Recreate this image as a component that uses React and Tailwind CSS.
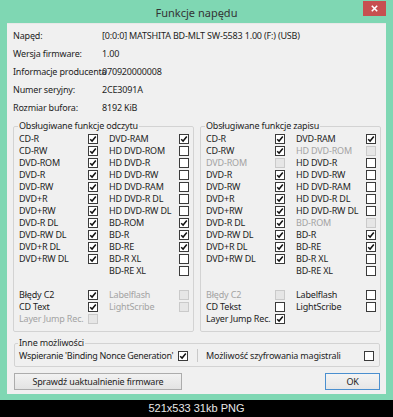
import React from "react";

const FONT = { fontFamily: '"Noto Sans", "Open Sans", sans-serif' };

function Box({ v }) {
  if (v === "d")
    return <span className="block w-[10px] h-[10px] border border-[#cacaca] bg-[#e6e6e6]" />;
  return (
    <span className="flex items-center justify-center w-[10px] h-[10px] border border-[#3a3a3a] bg-white">
      {v === "c" && (
        <svg width="8" height="8" viewBox="0 0 8 8">
          <path d="M1.2 4.2 L3.1 6.1 L6.8 1.6" fill="none" stroke="#111" strokeWidth="1.5" />
        </svg>
      )}
    </span>
  );
}

function Label({ t, d, extra = "" }) {
  return (
    <span className={"whitespace-nowrap leading-[12px] " + extra + " " + (d ? "text-[#a3a3a3]" : "text-[#1e1e1e]")}>
      {t}
    </span>
  );
}

function Group({ title, col1, col2, extra1, extra2 }) {
  const rows = [];
  for (let i = 0; i < 12; i++) {
    const a = col1[i];
    const b = col2[i];
    rows.push(
      <React.Fragment key={"r" + i}>
        {a ? <Label t={a[0]} d={a[1] === "d"} /> : <span />}
        {a ? <Box v={a[1]} /> : <span />}
        <Label t={b[0]} d={b[1] === "d"} />
        <Box v={b[1]} />
      </React.Fragment>
    );
  }
  rows.push(
    <React.Fragment key="blank">
      <span className="h-[12px]" />
      <span />
      <span />
      <span />
    </React.Fragment>
  );
  for (let i = 0; i < 3; i++) {
    const a = extra1[i];
    const b = extra2[i];
    rows.push(
      <React.Fragment key={"e" + i}>
        <Label t={a[0]} d={a[1] === "d"} />
        <Box v={a[1]} />
        {b ? <Label t={b[0]} d={b[1] === "d"} /> : <span />}
        {b ? <Box v={b[1]} /> : <span />}
      </React.Fragment>
    );
  }
  return (
    <fieldset className="border border-[#d3d3d3] rounded-[2px] min-w-0">
      <legend className="ml-[4px] px-[1px] leading-[12px] text-[#1e1e1e] whitespace-nowrap">{title}</legend>
      <div className="grid grid-cols-[69px_21px_70px_10px] auto-rows-[12px] items-center pl-[5px] pt-[1px] pb-[6px]">
        {rows}
      </div>
    </fieldset>
  );
}

const readCol1 = [
  ["CD-R", "c"], ["CD-RW", "c"], ["DVD-ROM", "c"], ["DVD-R", "c"], ["DVD-RW", "c"], ["DVD+R", "c"],
  ["DVD+RW", "c"], ["DVD-R DL", "c"], ["DVD-RW DL", "c"], ["DVD+R DL", "c"], ["DVD+RW DL", "c"],
];
const readCol2 = [
  ["DVD-RAM", "c"], ["HD DVD-ROM", "u"], ["HD DVD-R", "u"], ["HD DVD-RW", "u"], ["HD DVD-RAM", "u"],
  ["HD DVD-R DL", "u"], ["HD DVD-RW DL", "u"], ["BD-ROM", "c"], ["BD-R", "c"], ["BD-RE", "c"],
  ["BD-R XL", "u"], ["BD-RE XL", "u"],
];
const writeCol1 = [
  ["CD-R", "c"], ["CD-RW", "c"], ["DVD-ROM", "d"], ["DVD-R", "c"], ["DVD-RW", "c"], ["DVD+R", "c"],
  ["DVD+RW", "c"], ["DVD-R DL", "c"], ["DVD-RW DL", "c"], ["DVD+R DL", "c"], ["DVD+RW DL", "c"],
];
const writeCol2 = [
  ["DVD-RAM", "c"], ["HD DVD-ROM", "d"], ["HD DVD-R", "u"], ["HD DVD-RW", "u"], ["HD DVD-RAM", "u"],
  ["HD DVD-R DL", "u"], ["HD DVD-RW DL", "u"], ["BD-ROM", "d"], ["BD-R", "c"], ["BD-RE", "c"],
  ["BD-R XL", "u"], ["BD-RE XL", "u"],
];

const info = [
  ["Napęd:", "[0:0:0] MATSHITA BD-MLT SW-5583 1.00 (F:) (USB)"],
  ["Wersja firmware:", "1.00"],
  ["Informacje producenta", "070920000008"],
  ["Numer seryjny:", "2CE3091A"],
  ["Rozmiar bufora:", "8192 KiB"],
];

export default function App() {
  return (
    <div className="w-[393px] h-[417px] bg-black flex flex-col text-[9px] tracking-[-0.18px]" style={FONT}>
      <div className="h-[400px] bg-[#7fd7b3] px-[7px] pb-[6px] flex flex-col">
        <div className="h-[23px] grid grid-cols-[1fr_auto_1fr] items-start shrink-0">
          <span />
          <span className="text-[11px] leading-[14px] mt-[6px] tracking-normal text-[#333]">Funkcje napędu</span>
          <span className="justify-self-end mt-[1px] w-[23px] h-[15px] bg-[#c75050] flex items-center justify-center">
            <svg width="7" height="7" viewBox="0 0 7 7">
              <path d="M0.8 0.8 L6.2 6.2 M6.2 0.8 L0.8 6.2" stroke="#fff" strokeWidth="1.6" />
            </svg>
          </span>
        </div>
        <div className="flex-1 bg-[#f0f0f0] border-t border-[#e8e8e8] flex flex-col">
          <div className="pt-[3px] pl-[6px] flex flex-col">
            {info.map(([k, v]) => (
              <div key={k} className="h-[18px] flex items-center">
                <span className="w-[89px] shrink-0 whitespace-nowrap text-[#1e1e1e]">{k}</span>
                <span className="whitespace-nowrap text-[#1e1e1e]">{v}</span>
              </div>
            ))}
          </div>
          <div className="mt-[3px] grid grid-cols-2 gap-[6px] pl-[6px] pr-[5px]">
            <Group
              title="Obsługiwane funkcje odczytu"
              col1={readCol1}
              col2={readCol2}
              extra1={[["Błędy C2", "c"], ["CD Text", "c"], ["Layer Jump Rec.", "d"]]}
              extra2={[["Labelflash", "d"], ["LightScribe", "d"]]}
            />
            <Group
              title="Obsługiwane funkcje zapisu"
              col1={writeCol1}
              col2={writeCol2}
              extra1={[["Błędy C2", "d"], ["CD Tekst", "u"], ["Layer Jump Rec.", "c"]]}
              extra2={[["Labelflash", "u"], ["LightScribe", "u"]]}
            />
          </div>
          <div className="mt-[5px] ml-[7px] mr-[6px]">
            <fieldset className="border border-[#d3d3d3] rounded-[2px] min-w-0">
              <legend className="ml-[3px] px-[1px] leading-[12px] text-[#1e1e1e] whitespace-nowrap">Inne możliwości</legend>
              <div className="grid grid-cols-[159px_10px_9px_1px_8px_158px_10px] items-center h-[12px] pl-[4px]">
                <Label t="Wspieranie 'Binding Nonce Generation'" extra="tracking-[-0.3px]" />
                <Box v="c" />
                <span />
                <span className="w-[1px] h-[13px] bg-[#c9c9c9]" />
                <span />
                <Label t="Możliwość szyfrowania magistrali" />
                <Box v="u" />
              </div>
              <div className="h-[5px]" />
            </fieldset>
          </div>
          <div className="mt-[6px] pl-[7px] pr-[6px] flex justify-between">
            <button className="w-[168px] h-[17px] border border-[#acacac] bg-gradient-to-b from-[#f2f2f2] to-[#e3e3e3] text-[#1e1e1e] leading-[15px]">
              Sprawdź uaktualnienie firmware
            </button>
            <button className="w-[55px] h-[17px] border border-[#4a8fcf] bg-gradient-to-b from-[#f4f4f4] to-[#e6e6e6] text-[#1e1e1e] leading-[15px]">
              OK
            </button>
          </div>
        </div>
      </div>
      <div className="flex-1 flex items-center justify-center text-[11px] tracking-normal text-[#e8e8e8]" style={{ fontFamily: '"Liberation Sans", Arial, sans-serif' }}>
        521x533 31kb PNG
      </div>
    </div>
  );
}
